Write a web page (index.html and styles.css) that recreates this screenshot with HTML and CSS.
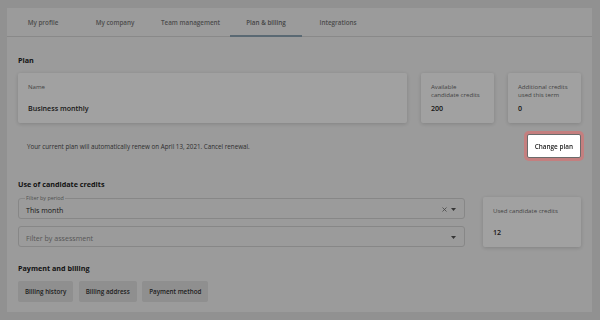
FILE: index.html
```html
<!DOCTYPE html>
<html lang="en">
<head>
    <meta charset="UTF-8">
    <meta name="viewport" content="width=device-width, initial-scale=1.0">
    <title>Plan &amp; billing</title>
    <link rel="stylesheet" href="styles.css">
</head>
<body>
    <div class="panel">
        <nav class="tabs">
            <a class="tab" href="#">My profile</a>
            <a class="tab" href="#">My company</a>
            <a class="tab" href="#">Team management</a>
            <a class="tab active" href="#">Plan &amp; billing</a>
            <a class="tab" href="#">Integrations</a>
        </nav>

        <div class="content">
            <h2>Plan</h2>
            <div class="plan-row">
                <div class="card card-name">
                    <div class="label">Name</div>
                    <div class="value">Business monthly</div>
                </div>
                <div class="card card-small">
                    <div class="label">Available candidate credits</div>
                    <div class="value">200</div>
                </div>
                <div class="card card-small">
                    <div class="label">Additional credits used this term</div>
                    <div class="value">0</div>
                </div>
            </div>
            <div class="renew-row">
                <p class="renew-text">Your current plan will automatically renew on April 13, 2021. Cancel renewal.</p>
                <button class="btn-outline highlighted">Change plan</button>
            </div>

            <h2 class="spaced">Use of candidate credits</h2>
            <div class="usage-row">
                <div class="filters">
                    <div class="field">
                        <span class="field-label">Filter by period</span>
                        <span class="field-value">This month</span>
                        <svg class="icon-clear" width="5" height="5" viewBox="0 0 10 10"><path d="M1 1L9 9M9 1L1 9" stroke="#6f6f6f" stroke-width="1.6"/></svg>
                        <svg class="icon-caret" width="5" height="3" viewBox="0 0 10 6"><path d="M0 0H10L5 6Z" fill="#555"/></svg>
                    </div>
                    <div class="field">
                        <span class="field-placeholder">Filter by assessment</span>
                        <svg class="icon-caret" width="5" height="3" viewBox="0 0 10 6"><path d="M0 0H10L5 6Z" fill="#555"/></svg>
                    </div>
                </div>
                <div class="card card-used">
                    <div class="label">Used candidate credits</div>
                    <div class="value">12</div>
                </div>
            </div>

            <h2 class="spaced-sm">Payment and billing</h2>
            <div class="billing-links">
                <button class="link-btn">Billing history</button>
                <button class="link-btn">Billing address</button>
                <button class="link-btn">Payment method</button>
            </div>
        </div>
    </div>

    <div class="overlay"></div>
</body>
</html>
```

FILE: styles.css
```css
* {
    box-sizing: border-box;
}
body {
    margin: 0;
    background: #e6e6e6;
    font-family: 'Open Sans', sans-serif;
    color: #2b2b2b;
}
.panel {
    margin: 8px 8px 0 7px;
    height: 304px;
    background: #f6f6f6;
}

/* tabs */
.tabs {
    display: flex;
    height: 29px;
    border-bottom: 1px solid #d9d9d9;
}
.tab {
    min-width: 72px;
    padding: 2px 10px 0;
    display: flex;
    align-items: center;
    justify-content: center;
    font-size: 6.3px;
    font-weight: 600;
    color: #7a7a7a;
    text-decoration: none;
    border-bottom: 2px solid transparent;
    margin-bottom: -1px;
}
.tab.active {
    border-bottom-color: #8fa6b6;
    color: #6e6e6e;
}

.content {
    padding: 17px 11px 0 11px;
}
h2 {
    margin: 0 0 7px;
    font-size: 7.2px;
    line-height: 12px;
    font-weight: 700;
    color: #222;
}
h2.spaced {
    margin-top: 20px;
}
h2.spaced-sm {
    margin-top: 15px;
}

/* cards */
.plan-row {
    display: flex;
    gap: 14px;
}
.card {
    background: #fff;
    border-radius: 2px;
    box-shadow: 0 1px 4px rgba(0,0,0,0.16);
    padding: 10px;
    display: flex;
    flex-direction: column;
    justify-content: space-between;
}
.card-name {
    flex: 1;
}
.card-small {
    width: 73px;
}
.card-used {
    width: 98px;
}
.label {
    font-size: 6.1px;
    line-height: 8.3px;
    color: #6c6c6c;
}
.value {
    margin-top: 3.5px;
    font-size: 7.1px;
    line-height: 10px;
    font-weight: 600;
    color: #2a2a2a;
}

/* renewal */
.renew-row {
    margin-top: 11px;
    padding-left: 9px;
    display: flex;
    align-items: center;
    justify-content: space-between;
}
.renew-text {
    margin: 0;
    font-size: 6.25px;
    color: #4a4a4a;
}
.btn-outline {
    height: 24px;
    padding: 0 7px;
    font-family: inherit;
    font-size: 6.4px;
    font-weight: 600;
    color: #222;
    background: #fff;
    border: 1px solid #6b6b6b;
    border-radius: 2px;
}
.highlighted {
    position: relative;
    z-index: 2;
    box-shadow: 0 0 0 3px #c47f7f;
}

/* filters */
.usage-row {
    display: flex;
    gap: 18px;
}
.filters {
    flex: 1;
    padding-top: 1px;
    display: flex;
    flex-direction: column;
    gap: 7px;
}
.field {
    position: relative;
    height: 21px;
    padding: 2px 8px 0 7px;
    display: flex;
    align-items: center;
    gap: 4px;
    border: 1px solid #d6d6d6;
    border-radius: 3px;
}
.field-label {
    position: absolute;
    top: -4px;
    left: 6px;
    padding: 0 1px;
    font-size: 5.4px;
    line-height: 7px;
    color: #7d7d7d;
    background: #f6f6f6;
}
.field-value {
    flex: 1;
    font-size: 7.1px;
    color: #2a2a2a;
}
.field-placeholder {
    flex: 1;
    font-size: 7.1px;
    color: #8a8a8a;
}

/* billing */
.billing-links {
    display: flex;
    gap: 5.5px;
}
.link-btn {
    height: 21px;
    padding: 0 7px;
    font-family: inherit;
    font-size: 6.25px;
    font-weight: 600;
    color: #333;
    background: #e2e2e2;
    border: none;
    border-radius: 2px;
}

.overlay {
    position: fixed;
    inset: 0;
    z-index: 1;
    background: rgba(0,0,0,0.37);
}
```
